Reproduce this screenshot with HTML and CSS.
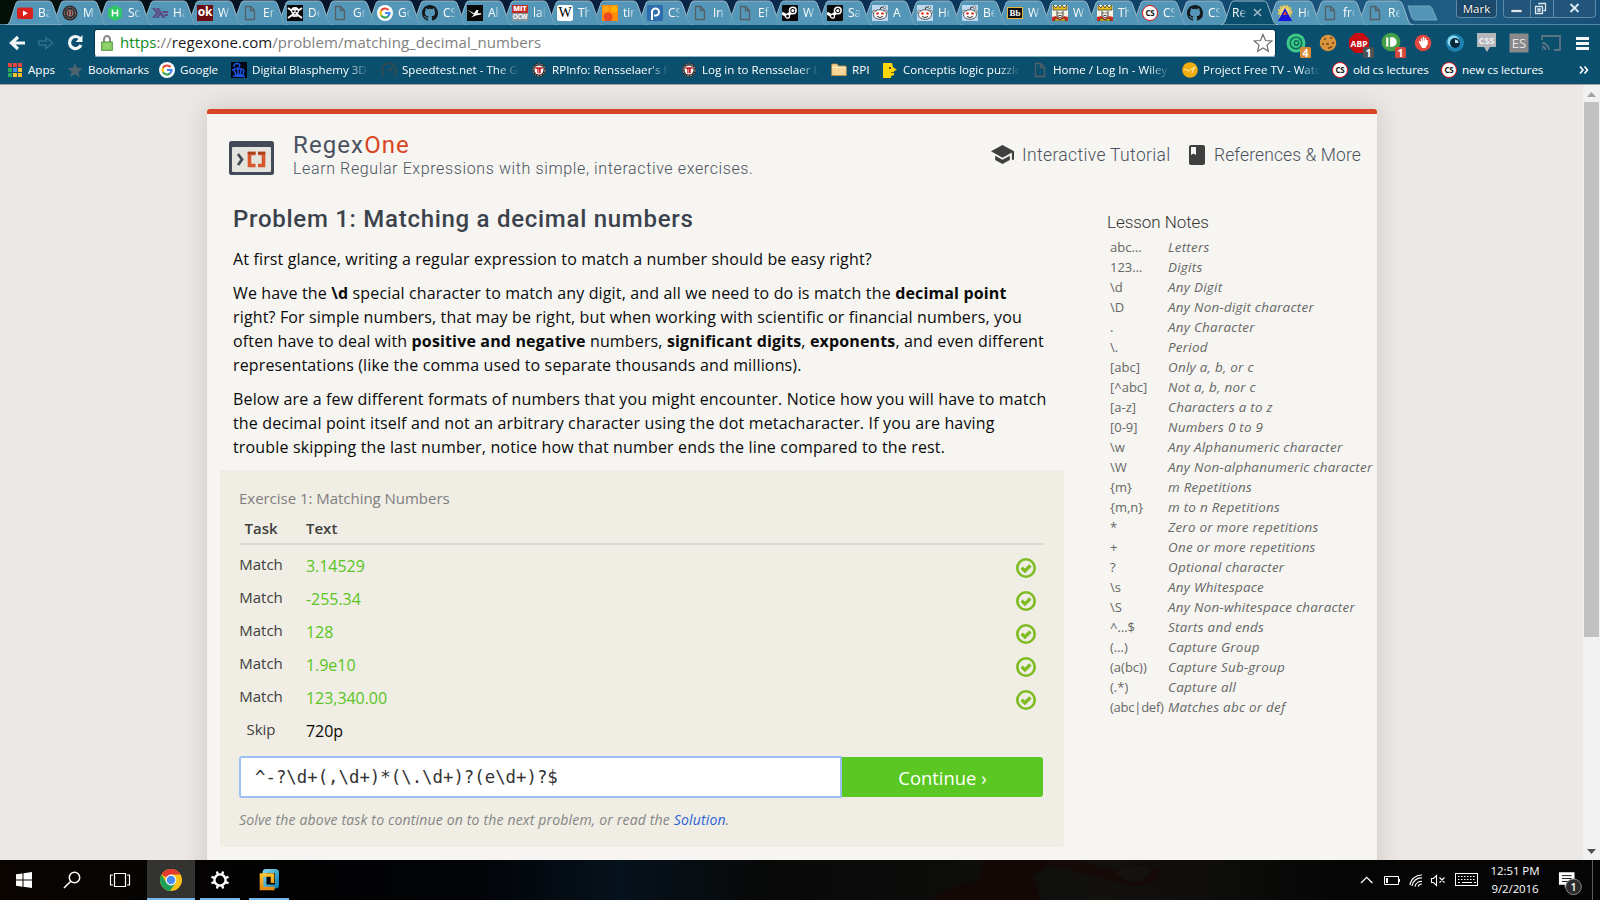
FILE: index.html
```html
<!DOCTYPE html>
<html lang="en">
<head>
<meta charset="utf-8">
<title>RegexOne</title>
<link rel="stylesheet" href="styles.css">
</head>
<body>
<svg class="defs" width="0" height="0">
  <symbol id="tab" viewBox="0 0 58 25"><path d="M0 25C2.5 24.5 3.500 22.500 4.500 20L9.500 4.500C10.200 2.200 11 1 13.500 1H42C44.500 1 45.500 2 46.500 4.500L52 20C53 22.500 54 24.500 57 25Z" fill="currentColor" stroke="#9dbdcc" stroke-width="1"/></symbol>
  <symbol id="tabn" viewBox="0 0 58 25"><path d="M12 25C9 24.500 8 22.500 7 20L5.500 16L9.500 4.500C10.200 2.200 11 1 13.500 1H42C44.500 1 45.500 2 46.500 4.500L52 20C53 22.500 54 24.500 57 25Z" fill="currentColor"/><path d="M5.800 15L9.500 4.500C10.200 2.200 11 1 13.500 1H42C44.500 1 45.500 2 46.500 4.500L52 20C53 22.500 54 24.500 57 25" fill="none" stroke="#9dbdcc"/></symbol>
  <symbol id="yt" viewBox="0 0 16 16"><rect y="2.500" width="16" height="11.500" rx="2.500" fill="#d9201c"/><path d="M6 5.500V11L11 8.200Z" fill="#fff"/></symbol>
  <symbol id="coin" viewBox="0 0 16 16"><circle cx="8" cy="8" r="7.500" fill="#2e2b2b"/><circle cx="8" cy="8" r="5.500" fill="none" stroke="#9c8d88" stroke-dasharray="1.500 1"/><circle cx="8" cy="8" r="3.500" fill="#8b8580"/><path d="M6.500 5.500V10.500M9.500 5.500V10.500" stroke="#7b2020" stroke-width="1.300"/></symbol>
  <symbol id="hr" viewBox="0 0 16 16"><path d="M8 0L15 4V12L8 16L1 12V4Z" fill="#2ec866"/><path d="M5.500 4.500V11.500M10.500 4.500V11.500M5.500 8H10.500" stroke="#fff" stroke-width="1.600"/></symbol>
  <symbol id="hs" viewBox="0 0 16 16"><path d="M0 3H3L7 8L3 13H0L4 8ZM4 3H7L13.500 13H10.500L8.500 10L6.500 13H4L7.500 8ZM10 6H16V8H11.300ZM11.500 9H16V11H12.800Z" fill="#5d4b86"/></symbol>
  <symbol id="file" viewBox="0 0 16 16"><path d="M3.500 1.500H8.500L12.500 5.500V14.500H3.500ZM8.500 1.500V5.500H12.500" fill="none" stroke="#555f66" stroke-width="1.300"/></symbol>
  <symbol id="skull" viewBox="0 0 16 16"><rect width="16" height="16" fill="#050505"/><path d="M1 3L15 13M15 3L1 13" stroke="#fff" stroke-width="1.800"/><path d="M4 6Q4 2 8 2T12 6Q12 8 10.500 9V12H5.500V9Q4 8 4 6Z" fill="#fff"/><path d="M5.500 5.500H7.200V7H5.500ZM8.800 5.500H10.500V7H8.800ZM7.500 8H8.500V9H7.500ZM7 10V12M9 10V12" fill="#000" stroke="#000" stroke-width=".3"/></symbol>
  <symbol id="goog" viewBox="0 0 16 16"><circle cx="8" cy="8" r="8" fill="#fff"/><g fill="none" stroke-width="2.200"><path d="M11.400 5A4.500 4.500 0 0 0 4.100 5.800" stroke="#ea4335"/><path d="M4.100 5.800A4.500 4.500 0 0 0 4.100 10.200" stroke="#fbbc05"/><path d="M4.100 10.200A4.500 4.500 0 0 0 11 11.400" stroke="#34a853"/><path d="M11 11.400A4.500 4.500 0 0 0 12.500 8H8" stroke="#4285f4"/></g></symbol>
  <symbol id="gh" viewBox="0 0 16 16"><path d="M8 0C3.580 0 0 3.580 0 8c0 3.540 2.290 6.530 5.470 7.590.4.070.55-.17.55-.38v-1.490c-2.010.37-2.530-.49-2.690-.94-.09-.23-.48-.94-.82-1.130-.28-.15-.68-.52-.01-.53.63-.01 1.080.58 1.230.82.72 1.210 1.870.87 2.330.66.07-.52.280-.87.510-1.070-1.780-.2-3.640-.89-3.640-3.950 0-.87.310-1.590.82-2.150-.08-.2-.36-1.020.08-2.120 0 0 .67-.21 2.200.82a7.600 7.600 0 0 1 4 0c1.530-1.040 2.200-.82 2.200-.82.440 1.100.160 1.920.08 2.120.510.560.820 1.270.820 2.150 0 3.070-1.870 3.750-3.650 3.950.290.250.540.730.540 1.480v2.200c0 .210.150.460.550.380A8 8 0 0 0 16 8c0-4.420-3.580-8-8-8z" fill="#15191c"/></symbol>
  <symbol id="bird" viewBox="0 0 16 16"><rect width="16" height="16" fill="#080808"/><path d="M0 4.500L7 8.200L9.500 5H11.500L10.500 8.300H14.500L14 9.500L9 10.500L4 12.500L7 9.800Z" fill="#fff"/></symbol>
  <symbol id="tin" viewBox="0 0 16 16"><rect width="16" height="16" fill="#ff8c08"/><circle cx="12" cy="4" r="3.500" fill="#ffb000"/><circle cx="4" cy="4" r="3" fill="#ffa51a"/><circle cx="6" cy="12" r="4.500" fill="#ed4920"/></symbol>
  <symbol id="rho" viewBox="0 0 16 16"><rect width="16" height="16" rx="1.500" fill="#2f6cad"/><path d="M5 15V7A3.500 3.500 0 1 1 8.500 10.500H7" fill="none" stroke="#fff" stroke-width="2"/></symbol>
  <symbol id="steam" viewBox="0 0 16 16"><rect width="16" height="16" rx="1" fill="#090909"/><path d="M0 8L5 11L10 6.500" stroke="#fff" stroke-width="3.200" fill="none"/><circle cx="10.800" cy="5.500" r="3.300" fill="#090909" stroke="#fff" stroke-width="1.600"/><circle cx="10.800" cy="5.500" r="1.500" fill="#fff"/><circle cx="5.500" cy="11.200" r="2" fill="#090909" stroke="#fff" stroke-width="1.200"/></symbol>
  <symbol id="red" viewBox="0 0 16 16"><rect width="16" height="16" fill="#bed9ef"/><path d="M8 5L9 2L12 2.500" fill="none" stroke="#444"/><circle cx="12.500" cy="2.500" r="1.200" fill="#fff" stroke="#444" stroke-width=".7"/><circle cx="2.500" cy="7" r="1.800" fill="#fff" stroke="#555" stroke-width=".8"/><circle cx="13.500" cy="7" r="1.800" fill="#fff" stroke="#555" stroke-width=".8"/><ellipse cx="8" cy="9.500" rx="6.500" ry="4.800" fill="#fff" stroke="#444" stroke-width=".9"/><circle cx="5.500" cy="8.500" r="1.300" fill="#ee2a18"/><circle cx="10.500" cy="8.500" r="1.300" fill="#ee2a18"/><path d="M5 11.500Q8 13.500 11 11.500" fill="none" stroke="#333"/></symbol>
  <symbol id="king" viewBox="0 0 16 16"><rect width="16" height="16" fill="#f7f3e4"/><path d="M1 0L4 3L6 0L8 3L10 0L12 3L15 0V5H1Z" fill="#e9c51e" stroke="#222" stroke-width=".7"/><path d="M5 6V11L8 13L11 11V6M5.500 8H7.500M8.500 8H10.500M6.500 10.500H9.500" fill="none" stroke="#333" stroke-width=".9"/><path d="M0 16V12L4 11L8 14L12 11L16 12V16Z" fill="#c62f23"/><path d="M2 16L4 13L8 15L12 13L14 16Z" fill="#e5bd20" stroke="#222" stroke-width=".6"/></symbol>
  <symbol id="tri" viewBox="0 0 16 16"><circle cx="8" cy="7" r="6" fill="#e8d77a" stroke="#d9c25f" stroke-width="3" stroke-dasharray="2 1.200"/><path d="M8 3L15 16H1Z" fill="#1616dd"/><path d="M8 6L10 10H6Z" fill="#e64a2e"/></symbol>
  <symbol id="star" viewBox="0 0 16 16"><path d="M8 .8L10.100 5.800L15.500 6.300L11.400 9.800L12.700 15L8 12.200L3.300 15L4.600 9.800L.5 6.300L5.900 5.800Z" fill="currentColor"/></symbol>
  <symbol id="blas" viewBox="0 0 16 16"><rect width="16" height="16" fill="#020612"/><path d="M3 5Q3 1 6.500 1.500T8 5M1 8L7 6L13 8M3 8L5 13H12L13 8M7 7V13M10 8L9 13M2 14L14 14.500" fill="none" stroke="#1a55e8" stroke-width="1.500"/></symbol>
  <symbol id="speed" viewBox="0 0 16 16"><path d="M3.200 13.500A7 7 0 1 1 12.800 13.500" fill="none" stroke="#3a4a50" stroke-width="1.600"/><path d="M7.500 9.500L12 5" stroke="#3a4a50" stroke-width="1.800"/></symbol>
  <symbol id="rpi" viewBox="0 0 16 16"><circle cx="8" cy="8" r="7" fill="#232020"/><circle cx="8" cy="8" r="6" fill="none" stroke="#b9aaa5" stroke-dasharray="2 1"/><circle cx="8" cy="8" r="4.500" fill="#fff"/><path d="M4 5H12V7H10V11.500H6V7H4ZM7.600 7V11" fill="#c51d22" stroke="#fff" stroke-width=".5"/></symbol>
  <symbol id="folder" viewBox="0 0 16 16"><path d="M.7 3Q.7 2 1.700 2H6L7.500 4H14Q15.300 4 15.300 5V13.500H.7Z" fill="#f7d798" stroke="#c38f43" stroke-width=".8"/><path d="M1.200 5.500H14.800" stroke="#fff0c8"/></symbol>
  <symbol id="conc" viewBox="0 0 16 16"><path d="M1 1H10L11 5L15 8L12 9V13L9 14V16H1Z" fill="#ffd60a"/><circle cx="8" cy="6" r="1" fill="#222"/><path d="M9 10.500H12" stroke="#7a6600"/></symbol>
  <symbol id="pft" viewBox="0 0 16 16"><circle cx="8" cy="8" r="7.800" fill="#f2ae0e"/><path d="M2 8Q4 6 5 8T8 8T11 7L14 5M10 11L12 5" fill="none" stroke="#fff0b8"/></symbol>
  <symbol id="check" viewBox="0 0 20 20"><circle cx="10" cy="10" r="8.700" fill="none" stroke="#7ebc22" stroke-width="2.600"/><path d="M5.600 9.800L8.900 12.900L14.400 7.500" fill="none" stroke="#7ebc22" stroke-width="3.300"/></symbol>
</svg>

<header class="chrome">
  <div class="strip">
    <div class="tabs">
      <div class="tab"><svg class="shape"><use href="#tab"/></svg><svg class="fav"><use href="#yt"/></svg><span>Ba</span></div>
      <div class="tab"><svg class="shape"><use href="#tabn"/></svg><svg class="fav"><use href="#coin"/></svg><span>M</span></div>
      <div class="tab"><svg class="shape"><use href="#tabn"/></svg><svg class="fav"><use href="#hr"/></svg><span>So</span></div>
      <div class="tab"><svg class="shape"><use href="#tabn"/></svg><svg class="fav"><use href="#hs"/></svg><span>Ha</span></div>
      <div class="tab"><svg class="shape"><use href="#tabn"/></svg><div class="fav ficon okc">ok</div><span>W</span></div>
      <div class="tab"><svg class="shape"><use href="#tabn"/></svg><svg class="fav"><use href="#file"/></svg><span>En</span></div>
      <div class="tab"><svg class="shape"><use href="#tabn"/></svg><svg class="fav"><use href="#skull"/></svg><span>De</span></div>
      <div class="tab"><svg class="shape"><use href="#tabn"/></svg><svg class="fav"><use href="#file"/></svg><span>Gr</span></div>
      <div class="tab"><svg class="shape"><use href="#tabn"/></svg><svg class="fav"><use href="#goog"/></svg><span>Go</span></div>
      <div class="tab"><svg class="shape"><use href="#tabn"/></svg><svg class="fav"><use href="#gh"/></svg><span>CS</span></div>
      <div class="tab"><svg class="shape"><use href="#tabn"/></svg><svg class="fav"><use href="#bird"/></svg><span>Al</span></div>
      <div class="tab"><svg class="shape"><use href="#tabn"/></svg><div class="fav ficon mit"><b>MIT</b><i>OCW</i></div><span>lab</span></div>
      <div class="tab"><svg class="shape"><use href="#tabn"/></svg><div class="fav ficon wiki">W</div><span>Th</span></div>
      <div class="tab"><svg class="shape"><use href="#tabn"/></svg><svg class="fav"><use href="#tin"/></svg><span>tin</span></div>
      <div class="tab"><svg class="shape"><use href="#tabn"/></svg><svg class="fav"><use href="#rho"/></svg><span>CS</span></div>
      <div class="tab"><svg class="shape"><use href="#tabn"/></svg><svg class="fav"><use href="#file"/></svg><span>Int</span></div>
      <div class="tab"><svg class="shape"><use href="#tabn"/></svg><svg class="fav"><use href="#file"/></svg><span>Ef</span></div>
      <div class="tab"><svg class="shape"><use href="#tabn"/></svg><svg class="fav"><use href="#steam"/></svg><span>W</span></div>
      <div class="tab"><svg class="shape"><use href="#tabn"/></svg><svg class="fav"><use href="#steam"/></svg><span>Sa</span></div>
      <div class="tab"><svg class="shape"><use href="#tabn"/></svg><svg class="fav"><use href="#red"/></svg><span>A</span></div>
      <div class="tab"><svg class="shape"><use href="#tabn"/></svg><svg class="fav"><use href="#red"/></svg><span>Ho</span></div>
      <div class="tab"><svg class="shape"><use href="#tabn"/></svg><svg class="fav"><use href="#red"/></svg><span>Be</span></div>
      <div class="tab"><svg class="shape"><use href="#tabn"/></svg><div class="fav ficon bb">Bb</div><span>W</span></div>
      <div class="tab"><svg class="shape"><use href="#tabn"/></svg><svg class="fav"><use href="#king"/></svg><span>W</span></div>
      <div class="tab"><svg class="shape"><use href="#tabn"/></svg><svg class="fav"><use href="#king"/></svg><span>Th</span></div>
      <div class="tab"><svg class="shape"><use href="#tabn"/></svg><div class="fav ficon cs">CS</div><span>CS</span></div>
      <div class="tab"><svg class="shape"><use href="#tabn"/></svg><svg class="fav"><use href="#gh"/></svg><span>CS</span></div>
      <div class="tab active"><svg class="shape"><use href="#tab"/></svg><span>Re</span><svg class="close" viewBox="0 0 10 10"><path d="M1 1L9 9M9 1L1 9" stroke="#a9c0ca" stroke-width="1.500"/></svg></div>
      <div class="tab"><svg class="shape"><use href="#tabn"/></svg><svg class="fav"><use href="#tri"/></svg><span>Ho</span></div>
      <div class="tab"><svg class="shape"><use href="#tabn"/></svg><svg class="fav"><use href="#file"/></svg><span>fro</span></div>
      <div class="tab"><svg class="shape"><use href="#tabn"/></svg><svg class="fav"><use href="#file"/></svg><span>Re</span></div>
    </div>
    <svg class="newtab" viewBox="0 0 31 16"><path d="M1 1H22Q24 1 25 3L30 15H8Q6 15 5 13Z" fill="#5494b6" stroke="#7fb0c8" stroke-width=".8"/></svg>
    <div class="user">Mark</div>
    <div class="winctl">
      <svg viewBox="0 0 93 19" width="93" height="19"><path d="M26.500 0V18M49.500 0V18" stroke="#5f8ca8"/><rect x="7" y="9.500" width="11" height="3" fill="#d9e6ee" stroke="#20425c" stroke-width=".6"/><path d="M35 4.500V3.500H41.500V10.500H39.500M31.500 6.500H38.500V13.500H31.500ZM34 9H36V11H34Z" fill="none" stroke="#d9e6ee" stroke-width="1.300"/><path d="M66.500 4L74.500 12M74.500 4L66.500 12" stroke="#d9e6ee" stroke-width="2"/></svg>
    </div>
  </div>

  <div class="toolbar">
    <svg class="navs" viewBox="0 0 94 28" width="94" height="28">
      <path d="M18 8L11.500 14L18 20M12 14H25" fill="none" stroke="#f3f6f7" stroke-width="3.200"/>
      <path d="M46 8.500L52.500 14L46 19.500V16H39V12H46Z" fill="none" stroke="#2f6f8b" stroke-width="1.600"/>
      <path d="M80 9.500A6 6 0 1 0 81 16" fill="none" stroke="#f3f6f7" stroke-width="3.200"/><path d="M82.500 6V13H75.500Z" fill="#f3f6f7"/>
    </svg>
    <div class="omni">
      <svg class="lock" viewBox="0 0 12 16"><path d="M3 8V4.500A3 3.500 0 0 1 9 4.500V8" fill="none" stroke="#8a8a8a" stroke-width="2"/><rect x=".7" y="7" width="10.600" height="8.300" fill="#8fd16a" stroke="#4d8f3a"/></svg>
      <span class="url"><b>https</b>://<i>regexone.com</i>/problem/matching_decimal_numbers</span>
      <svg class="fstar" viewBox="0 0 20 20"><path d="M10 1.500L12.500 7.500L18.700 8L14 12.100L15.400 18.300L10 15L4.600 18.300L6 12.100L1.300 8L7.500 7.500Z" fill="#fff" stroke="#6e6e6e" stroke-width="1.200"/></svg>
    </div>
    <svg class="exts" viewBox="0 0 322 30" width="322" height="30">
      <circle cx="17" cy="14" r="9.500" fill="#3fc98b"/><circle cx="17" cy="14" r="5.800" fill="none" stroke="#0c6f57" stroke-width="1.500"/><circle cx="17.500" cy="14" r="2.200" fill="none" stroke="#0c6f57" stroke-width="1.500"/>
      <rect x="21" y="18" width="11" height="11" rx="1.500" fill="#d98a36"/><text x="26.500" y="27.500" text-anchor="middle" font-size="10.500" font-weight="700" fill="#fff">4</text>
      <circle cx="49" cy="14" r="8.300" fill="#d9943e"/><path d="M45 10H47M51 9H53M47 15H50M53 14H55M49 19H51M43 15H45M51 18H53" stroke="#74430e" stroke-width="1.600"/>
      <path d="M76 4H84L90 10V18L84 24H76L70 18V10Z" fill="#c90d12"/><text x="80" y="17.500" text-anchor="middle" font-size="8.500" font-weight="700" fill="#fff" textLength="17">ABP</text>
      <rect x="84" y="18" width="11" height="11" rx="1.500" fill="#4c5154"/><text x="89.500" y="27.500" text-anchor="middle" font-size="10.500" font-weight="700" fill="#fff">1</text>
      <circle cx="112" cy="13" r="9.300" fill="#43a047"/><path d="M108.300 8.500V17.500" stroke="#fff" stroke-width="2.200"/><path d="M112 9.200V16.800H113A3.800 3.800 0 0 0 113 9.200Z" stroke="#fff" stroke-width="1.800" fill="#fff"/>
      <rect x="116" y="18" width="11" height="11" rx="1.500" fill="#d34a3c"/><text x="121.500" y="27.500" text-anchor="middle" font-size="10.500" font-weight="700" fill="#fff">1</text>
      <circle cx="144" cy="14" r="8.300" fill="#e4473d"/><path d="M140 13L142 17L143 19H146.500L148 16V11" fill="#fff"/><path d="M140 12L142.500 16M142.500 15V9.500M144.500 15V8M146.500 15V9M148 11V16" stroke="#fff" stroke-width="1.400" fill="none"/>
      <circle cx="176" cy="14" r="9" fill="#1c83b0"/><circle cx="174.500" cy="12.500" r="6" fill="#8bd8f0"/><circle cx="176" cy="14" r="5" fill="#06283c"/><path d="M176 10.500A3.500 3.500 0 0 1 179.500 14H176Z" fill="#bfe9f7"/>
      <path d="M198 4H217V18H211L208 23L205 18H198Z" fill="#b3b7ba"/><text x="207.500" y="15" text-anchor="middle" font-size="9" font-weight="700" fill="#f5f5f5" textLength="16">CSS</text>
      <rect x="230.500" y="4.500" width="19" height="19" fill="#89898b"/><text x="240" y="19" text-anchor="middle" font-size="13" fill="#e6e6e6">ES</text>
      <path d="M263 11V7H281V21H275M263 14A7 7 0 0 1 270 21M263 17.500A4 4 0 0 1 266.500 21M263 20.500H264" fill="none" stroke="#5a7682" stroke-width="1.800"/>
      <path d="M297 9.500H310M297 14.500H310M297 19.500H310" stroke="#f3f6f7" stroke-width="3.200"/>
    </svg>
  </div>

  <nav class="marks">
    <a class="m1"><svg viewBox="0 0 16 16"><path d="M1 1H5V5H1ZM6 1H10V5H6ZM11 1H15V5H11Z" fill="#e8453c"/><path d="M1 6H5V10H1ZM1 11H5V15H1Z" fill="#2aa562"/><path d="M6 6H10V10H6Z" fill="#4a8af4"/><path d="M11 6H15V10H11ZM6 11H10V15H6ZM11 11H15V15H11Z" fill="#f5c12c"/></svg><span>Apps</span></a>
    <a class="m2"><svg class="dim"><use href="#star"/></svg><span>Bookmarks</span></a>
    <a class="m3"><svg><use href="#goog"/></svg><span>Google</span></a>
    <a class="m4 fade"><svg><use href="#blas"/></svg><span>Digital Blasphemy 3D W</span></a>
    <a class="m5 fade"><svg><use href="#speed"/></svg><span>Speedtest.net - The Glo</span></a>
    <a class="m6 fade"><svg><use href="#rpi"/></svg><span>RPInfo: Rensselaer's Inf</span></a>
    <a class="m7 fade"><svg><use href="#rpi"/></svg><span>Log in to Rensselaer LM</span></a>
    <a class="m8"><svg><use href="#folder"/></svg><span>RPI</span></a>
    <a class="m9 fade"><svg><use href="#conc"/></svg><span>Conceptis logic puzzles</span></a>
    <a class="m10 fade"><svg><use href="#file"/></svg><span>Home / Log In - Wiley P</span></a>
    <a class="m11 fade"><svg><use href="#pft"/></svg><span>Project Free TV - Watch</span></a>
    <a class="m12"><div class="ficon cs">CS</div><span>old cs lectures</span></a>
    <a class="m13"><div class="ficon cs">CS</div><span>new cs lectures</span></a>
    <a class="more"><svg viewBox="0 0 10 10"><path d="M1 1.500L4 5L1 8.500M5.500 1.500L8.500 5L5.500 8.500" fill="none" stroke="#fff" stroke-width="1.600"/></svg></a>
  </nav>
</header>

<main class="view">
  <div class="card">
    <div class="head">
      <svg class="logo" viewBox="0 0 45 34"><rect width="45" height="34" rx="2.500" fill="#434a57"/><rect x="3" y="6" width="39" height="25" rx="1" fill="#e4e3dd"/><path d="M9 13L13 18.500L9 24" fill="none" stroke="#434a57" stroke-width="2.800"/><path d="M26.500 12.500H20.500V24.500H26.500M29 12.500H34.500V24.500H29" fill="none" stroke="#d8562b" stroke-width="3.600"/><path d="M18.700 12H26.500M29 12H36.300" stroke="#a84118" stroke-width="2.600"/></svg>
      <div class="brand"><div class="name">Regex<em>One</em></div><div class="tag">Learn Regular Expressions with simple, interactive exercises.</div></div>
      <div class="links">
        <svg class="cap" viewBox="1 2 22 20"><path d="M5 13.180v4L12 21l7-3.820v-4L12 17l-7-3.820zM12 3L1 9l11 6 9-4.910V17h2V9L12 3z" fill="#3f3f3f"/></svg>
        <span class="l1">Interactive Tutorial</span>
        <svg class="book" viewBox="4 2 16 20"><path d="M18 2H6c-1.100 0-2 .9-2 2v16c0 1.100.9 2 2 2h12c1.100 0 2-.9 2-2V4c0-1.100-.9-2-2-2zM6 4h5v8l-2.500-1.500L6 12V4z" fill="#3f3f3f"/></svg>
        <span class="l2">References &amp; More</span>
      </div>
    </div>
    <div class="cols">
      <section class="lesson">
        <h1>Problem 1: Matching a decimal numbers</h1>
        <p class="pa"><span>At first glance, writing a regular expression to match a number should be easy right?</span></p>
        <p class="pb"><span>We have the <b>\d</b> special character to match any digit, and all we need to do is match the <b>decimal point</b></span><br><span>right? For simple numbers, that may be right, but when working with scientific or financial numbers, you</span><br><span>often have to deal with <b>positive and negative</b> numbers, <b>significant digits</b>, <b>exponents</b>, and even different</span><br><span>representations (like the comma used to separate thousands and millions).</span></p>
        <p class="pc"><span>Below are a few different formats of numbers that you might encounter. Notice how you will have to match</span><br><span>the decimal point itself and not an arbitrary character using the dot metacharacter. If you are having</span><br><span>trouble skipping the last number, notice how that number ends the line compared to the rest.</span></p>
        <div class="box">
          <div class="title">Exercise 1: Matching Numbers</div>
          <div class="row th"><span>Task</span><span>Text</span></div>
          <div class="row"><span>Match</span><span class="ok">3.14529</span><svg><use href="#check"/></svg></div>
          <div class="row"><span>Match</span><span class="ok">-255.34</span><svg><use href="#check"/></svg></div>
          <div class="row"><span>Match</span><span class="ok">128</span><svg><use href="#check"/></svg></div>
          <div class="row"><span>Match</span><span class="ok">1.9e10</span><svg><use href="#check"/></svg></div>
          <div class="row"><span>Match</span><span class="ok">123,340.00</span><svg><use href="#check"/></svg></div>
          <div class="row"><span>Skip</span><span class="skip">720p</span></div>
          <div class="answer"><div class="field">^-?\d+(,\d+)*(\.\d+)?(e\d+)?$</div><div class="go">Continue ›</div></div>
          <div class="note">Solve the above task to continue on to the next problem, or read the <a>Solution</a>.</div>
        </div>
      </section>
      <aside class="notes">
        <h2>Lesson Notes</h2>
        <dl>
          <dt>abc…</dt><dd>Letters</dd><dt>123…</dt><dd>Digits</dd><dt>\d</dt><dd>Any Digit</dd><dt>\D</dt><dd>Any Non-digit character</dd><dt>.</dt><dd>Any Character</dd><dt>\.</dt><dd>Period</dd><dt>[abc]</dt><dd>Only a, b, or c</dd><dt>[^abc]</dt><dd>Not a, b, nor c</dd><dt>[a-z]</dt><dd>Characters a to z</dd><dt>[0-9]</dt><dd>Numbers 0 to 9</dd><dt>\w</dt><dd>Any Alphanumeric character</dd><dt>\W</dt><dd>Any Non-alphanumeric character</dd><dt>{m}</dt><dd>m Repetitions</dd><dt>{m,n}</dt><dd>m to n Repetitions</dd><dt>*</dt><dd>Zero or more repetitions</dd><dt>+</dt><dd>One or more repetitions</dd><dt>?</dt><dd>Optional character</dd><dt>\s</dt><dd>Any Whitespace</dd><dt>\S</dt><dd>Any Non-whitespace character</dd><dt>^…$</dt><dd>Starts and ends</dd><dt>(…)</dt><dd>Capture Group</dd><dt>(a(bc))</dt><dd>Capture Sub-group</dd><dt>(.*)</dt><dd>Capture all</dd><dt class="tight">(abc|def)</dt><dd>Matches abc or def</dd>
        </dl>
      </aside>
    </div>
  </div>
  <div class="scroll"><svg viewBox="0 0 9 5"><path d="M0 5L4.500 0L9 5Z" fill="#a3a3a3"/></svg><div class="thumb"></div><svg viewBox="0 0 9 5"><path d="M0 0H9L4.500 5Z" fill="#505050"/></svg></div>
</main>

<footer class="taskbar">
  <svg class="art" viewBox="0 0 560 40" width="560" height="40"><path d="M150 40Q172 24 198 21L204 0H270Q264 10 252 16L262 40Z" fill="#140807"/><path d="M262 0H300Q320 8 340 10Q360 0 378 8Q384 20 366 26Q345 26 320 18L272 6Z" fill="#150a08"/><path d="M336 12Q350 2 372 8Q366 24 346 22Z" fill="#14120e"/></svg>
  <div class="apps">
    <svg viewBox="0 0 48 40"><path d="M16 14.300L22.500 13.400V19.500H16ZM23.500 13.300L32 12V19.500H23.500ZM16 20.500H22.500V26.700L16 25.800ZM23.500 20.500H32V28L23.500 26.800Z" fill="#fff"/></svg>
    <svg viewBox="0 0 48 40"><circle cx="26.500" cy="17.500" r="5.200" fill="none" stroke="#fff" stroke-width="1.500"/><path d="M22.800 21.200L16 28" stroke="#fff" stroke-width="1.600"/></svg>
    <svg viewBox="0 0 48 40"><path d="M18.500 13.500H29.500V26.500H18.500ZM17 15H14.500V25H17M31 15H33.500V25H31" fill="none" stroke="#fff" stroke-width="1.200"/></svg>
    <div class="app on"><svg viewBox="0 0 24 24" width="24" height="24"><circle cx="12" cy="12" r="11" fill="#fbc116"/><path d="M12 12L2.500 6.500A11 11 0 0 1 21.500 6.500H12Z" fill="#e33b2e"/><path d="M2.470 6.500A11 11 0 0 0 11 23L16.800 14.700L7.300 14.700Z" fill="#1da05a"/><circle cx="12" cy="12" r="5.400" fill="#fff"/><circle cx="12" cy="12" r="4.300" fill="#4a8af4"/></svg></div>
    <div class="app gear"><svg viewBox="0 0 20 20" width="20" height="20"><circle cx="10" cy="10" r="5.600" fill="none" stroke="#fff" stroke-width="2.400"/><path d="M6.900 1.500L7.800 4.500M13.100 1.500L12.200 4.500M6.900 18.500L7.800 15.500M13.100 18.500L12.200 15.500M1.500 6.900L4.500 7.800M1.500 13.100L4.500 12.200M18.500 6.900L15.500 7.800M18.500 13.100L15.500 12.200" stroke="#fff" stroke-width="2.400"/></svg></div>
    <div class="app vm"><svg viewBox="0 0 22 24" width="22" height="24"><defs><linearGradient id="vmB" x1="0" y1="0" x2="1" y2="1"><stop offset="0" stop-color="#7ad0e8"/><stop offset="1" stop-color="#1687b5"/></linearGradient><linearGradient id="vmO" x1="0" y1="0" x2="0" y2="1"><stop offset="0" stop-color="#ffc22e"/><stop offset="1" stop-color="#e88b14"/></linearGradient></defs><rect x="6.500" y="3" width="12.500" height="15.500" rx="1.500" fill="none" stroke="url(#vmB)" stroke-width="4"/><path d="M14.500 15V7H3.500V20.500H16.500" fill="none" stroke="url(#vmO)" stroke-width="3.600"/></svg></div>
  </div>
  <div class="tray">
    <svg viewBox="0 0 125 40" width="125" height="40"><g fill="none" stroke="#fff"><path d="M1 23L6.700 17.300L12.400 23" stroke-width="1.300"/><path d="M24.500 16.500H38.500V24.500H24.500ZM39.500 19V22"/><path d="M27 18V23" stroke-width="2"/><path d="M50 25A11.500 11.500 0 0 1 62 15M52 26A9 9 0 0 1 62 18M55 26.500A6.500 6.500 0 0 1 62 21.500M58 26.500A4 4 0 0 1 62 24" stroke-width="1.200"/><path d="M71.500 18.500H73.500L76.500 15.500V25.500L73.500 22.500H71.500ZM79.500 17.500L84.500 22.500M84.500 17.500L79.500 22.500" stroke-width="1.100"/><rect x="95.500" y="13.500" width="22" height="12"/><path d="M98 16.500H116M98 19.500H116" stroke-width="1.200" stroke-dasharray="1.500 1.500"/><path d="M98 22.500H100M102 22.500H112M114 22.500H116"/></g></svg>
    <div class="clock">12:51 PM<br>9/2/2016</div>
    <svg class="bell" viewBox="0 0 36 40" width="36" height="40"><path d="M2 12H18V25H11L8 28V25H2Z" fill="#fff"/><path d="M5 15.500H15M5 18.500H15M5 21.500H12" stroke="#111"/><circle cx="17" cy="27" r="8" fill="#2b2b2b" stroke="#8a8a8a"/><text x="17" y="31" text-anchor="middle" font-size="11" font-weight="600" fill="#fff">1</text></svg>
  </div>
</footer>
</body>
</html>
```
FILE: styles.css
```css
* { box-sizing: border-box; }
body { margin: 0; width: 1600px; height: 900px; overflow: hidden; display: flex; flex-direction: column; font-family: "Open Sans", sans-serif; background: #ece8e5; }
.defs { display: none; }
text { font-family: "Open Sans", sans-serif; }

.chrome { height: 85px; flex: none; display: flex; flex-direction: column; background: #0a4f6e; color: #fff; border-bottom: 1px solid #a39fa1; }
.strip { height: 25px; flex: none; display: flex; background: linear-gradient(90deg, #031008 0, #06142a 300px, #0b2547 700px, #0d3f66 1100px, #1f5d85 1450px, #174f78 1600px); border-bottom: 1px solid #4e88a3; }
.tabs { display: flex; padding-left: 6px; width: 1407px; flex: none; }
.tab { position: relative; width: 45px; height: 25px; flex: none; padding-left: 11px; display: flex; align-items: center; color: #5496b7; }
.shape { position: absolute; left: 0; top: 0; width: 58px; height: 25px; }
.fav { position: relative; width: 16px; height: 16px; margin-top: 1px; flex: none; }
.ficon { width: 16px; height: 16px; flex: none; text-align: center; white-space: nowrap; }
.okc { background: #6d0c10; font-size: 12px; font-weight: 700; line-height: 14px; color: #fff; letter-spacing: -.3px; }
.mit { display: flex; flex-direction: column; background: #85959c; color: #fff; font-size: 7px; line-height: 8px; font-weight: 700; }
.mit b { background: #c22a25; height: 8px; }
.mit i { font-style: normal; font-size: 6.500px; letter-spacing: -.3px; }
.wiki { background: #fff; border-radius: 2.500px; color: #000; font: 14px/16px "Liberation Serif", serif; }
.bb { height: 12px; border: 1px solid #e5b636; background: #101010; color: #fff; font: 700 9px/10px "Liberation Serif", serif; }
.cs { border: 1.500px solid #e01515; border-radius: 50%; background: #fff; color: #111; font-size: 8px; line-height: 13px; font-weight: 700; letter-spacing: -.3px; }
.tab span { position: relative; margin-left: 5px; width: 12px; flex: none; overflow: hidden; white-space: nowrap; font-size: 12px; color: #fff; -webkit-mask-image: linear-gradient(90deg, #000 50%, transparent 108%); mask-image: linear-gradient(90deg, #000 50%, transparent 108%); }
.tab.active { color: #0a4f6e; z-index: 2; }
.tab.active span { margin-left: 0; width: 14px; }
.close { position: relative; width: 9px; height: 9px; margin-left: 7px; flex: none; }
.newtab { width: 31px; height: 16px; margin-top: 5px; flex: none; }
.user { margin-left: 18px; width: 41px; height: 18px; border: 1px solid #5d8aa7; border-top: 0; border-radius: 0 0 4px 4px; background: #1b4a6d; font-size: 11.500px; line-height: 17px; text-align: center; text-shadow: 0 0 2px #000; }
.winctl { margin-left: 6px; width: 93px; height: 18px; border: 1px solid #5d8aa7; border-top: 0; border-radius: 0 0 4px 4px; background: #21557b; }

.toolbar { height: 31px; flex: none; display: flex; padding-top: 4px; }
.navs { flex: none; }
.omni { width: 1182px; height: 28px; flex: none; border: 1px solid #06384f; border-bottom-color: #8fb2c2; border-radius: 3px; background: #fff; display: flex; align-items: center; padding: 0 2px 0 6px; }
.lock { width: 12px; height: 16px; margin-right: 7px; }
.url { flex: 1; font-size: 15px; color: #808080; line-height: 24px; padding-bottom: 2px; white-space: nowrap; letter-spacing: .07px; }
.url b { font-weight: 400; color: #0b8a1c; }
.url i { font-style: normal; color: #1a1a1a; }
.fstar { width: 20px; height: 20px; }
.exts { flex: none; margin-left: 3px; }

.marks { height: 27px; display: flex; align-items: center; font-size: 11.600px; padding-left: 7px; }
.marks a { display: flex; align-items: center; flex: none; white-space: nowrap; }
.marks svg, .marks .ficon { width: 16px; height: 16px; margin-right: 5px; flex: none; }
.marks .dim { color: #4e6570; }
.marks .fade span { width: 117px; overflow: hidden; -webkit-mask-image: linear-gradient(90deg, #000 82%, transparent 100%); mask-image: linear-gradient(90deg, #000 82%, transparent 100%); }
.m1 { width: 60px; } .m2 { width: 92px; } .m3 { width: 72px; } .m4 { width: 150px; } .m5 { width: 150px; } .m6 { width: 150px; } .m7 { width: 150px; } .m8 { width: 51px; }
.m9 { width: 150px; } .m10 { width: 150px; } .m11 { width: 150px; } .m12 { width: 109px; } .m13 { width: 138px; }
.m12, .m13 { letter-spacing: -.1px; }
.marks .more svg { width: 10px; height: 10px; margin: 0; }

.view { height: 775px; flex: none; display: flex; overflow: hidden; background: #ece8e5; padding-left: 207px; }
.card { width: 1170px; height: 800px; margin-top: 24px; flex: none; border-top: 5px solid #d94423; border-radius: 3px 3px 0 0; background: #f6f5f1; box-shadow: 0 0 26px rgba(60, 45, 35, .18); }
.head { height: 82px; display: flex; padding: 22px 17px 0 22px; font-family: Roboto, sans-serif; color: #4a5260; }
.logo { width: 45px; height: 34px; margin-top: 5px; flex: none; }
.brand { margin-left: 19px; margin-top: -1px; width: 698px; flex: none; white-space: nowrap; }
.name { font-size: 24px; line-height: 21px; letter-spacing: 1.100px; }
.name em { font-style: normal; color: #d94423; }
.tag { font-size: 16px; line-height: 26px; font-weight: 300; letter-spacing: .62px; }
.links { display: flex; height: 37px; align-items: center; font-size: 17.500px; font-weight: 300; letter-spacing: .06px; white-space: nowrap; }
.cap { width: 23px; height: 21px; margin-right: 8px; }
.l1 { width: 147px; margin-right: 20px; letter-spacing: .36px; }
.book { width: 16px; height: 20px; margin-right: 9px; }
.l2 { width: 147px; letter-spacing: .1px; }

.cols { display: flex; }
.lesson { width: 844px; margin-left: 13px; flex: none; }
h1 { margin: 0 0 0 13px; font: 500 24px/34px Roboto, sans-serif; letter-spacing: .72px; color: #3b424c; white-space: nowrap; padding-top: 6px; }
.lesson p { margin: 0 0 10px 13px; font-size: 16px; line-height: 24px; letter-spacing: .15px; color: #0a0a0a; white-space: nowrap; }
.lesson .pa { margin-top: 11px; }
.lesson .pc { letter-spacing: .155px; }
.box { margin-top: 11px; height: 377px; border-radius: 3px; background: #efede4; padding: 15px 20px 0 19px; white-space: nowrap; }
.title { font-size: 15px; line-height: 26px; color: #7f7f7f; letter-spacing: -.03px; }
.row { display: flex; height: 33px; line-height: 24px; font-size: 15px; color: #404040; padding-top: 6px; }
.row span:first-child { width: 44px; margin-right: 23px; text-align: center; }
.row .ok { color: #5ac522; }
.row .ok, .row .skip { font-size: 16px; padding-top: 2px; letter-spacing: -.05px; }
.row .skip { color: #0a0a0a; }
.row svg { width: 20px; height: 20px; margin: 6px 8px 0 auto; }
.th { border-bottom: 2px solid #d9d9d9; height: 34px; padding-top: 5px; font-weight: 600; margin-bottom: 1px; }
.answer { display: flex; align-items: center; margin-top: 12px; height: 42px; }
.field { width: 603px; height: 42px; border: 2px solid #9cc0f4; border-radius: 3px 0 0 3px; background: #fff; padding-left: 14px; font: 17.350px/38px "DejaVu Sans Mono", monospace; color: #333; }
.go { width: 201px; height: 40px; border-radius: 0 3px 3px 0; background: #5bc722; color: #fff; font-size: 18.400px; line-height: 41px; text-align: center; }
.note { font-size: 14px; font-style: italic; line-height: 24px; letter-spacing: .17px; color: #858585; margin-top: 10px; }
.note a { color: #2a60d8; }
.notes { margin-left: 43px; width: 270px; }
.notes h2 { margin: 11px 0 0; font: 300 17px/30px Roboto, sans-serif; letter-spacing: -.05px; color: #333; }
.notes dl { margin: 0 0 0 3px; display: grid; grid-template-columns: 58px 1fr; grid-auto-rows: 20px; font-size: 13px; line-height: 20px; color: #666; white-space: nowrap; }
.notes dd { margin: 0; font-style: italic; font-size: 13.400px; letter-spacing: .27px; }
.notes .tight { letter-spacing: -.25px; }
.scroll { margin-left: auto; width: 17px; height: 775px; background: #f1f1f1; display: flex; flex-direction: column; align-items: center; padding: 7px 0 6px; }
.scroll svg { width: 9px; height: 5px; flex: none; }
.thumb { width: 15px; height: 535px; margin: 5px 0 auto; background: #c1c1c1; }

.taskbar { position: relative; height: 40px; flex: none; display: flex; justify-content: space-between; background: linear-gradient(90deg, #0a0501 0, #020203 300px, #020408 480px, #06121c 620px, #080909 760px, #0b0b0a 900px, #12110e 1100px, #0f0e0c 1200px, #050505 1350px); color: #fff; }
.art { position: absolute; left: 780px; top: 0; }
.apps { position: relative; display: flex; }
.apps > svg { width: 48px; height: 40px; }
.apps > svg:nth-child(3) { margin-right: 3px; }
.app { height: 40px; display: flex; align-items: center; justify-content: center; border-bottom: 2px solid #76b5ec; padding-top: 1px; }
.on { width: 48px; background: #333332; }
.gear { width: 40px; margin-left: 5px; }
.vm { width: 40px; margin-left: 9px; }
.tray { position: relative; display: flex; width: 240px; }
.clock { width: 60px; font-size: 11.500px; line-height: 18px; padding-top: 2px; text-align: center; white-space: nowrap; letter-spacing: -.1px; }
.bell { margin-left: 12px; border-right: 1px solid #5a5a5a; }
```
